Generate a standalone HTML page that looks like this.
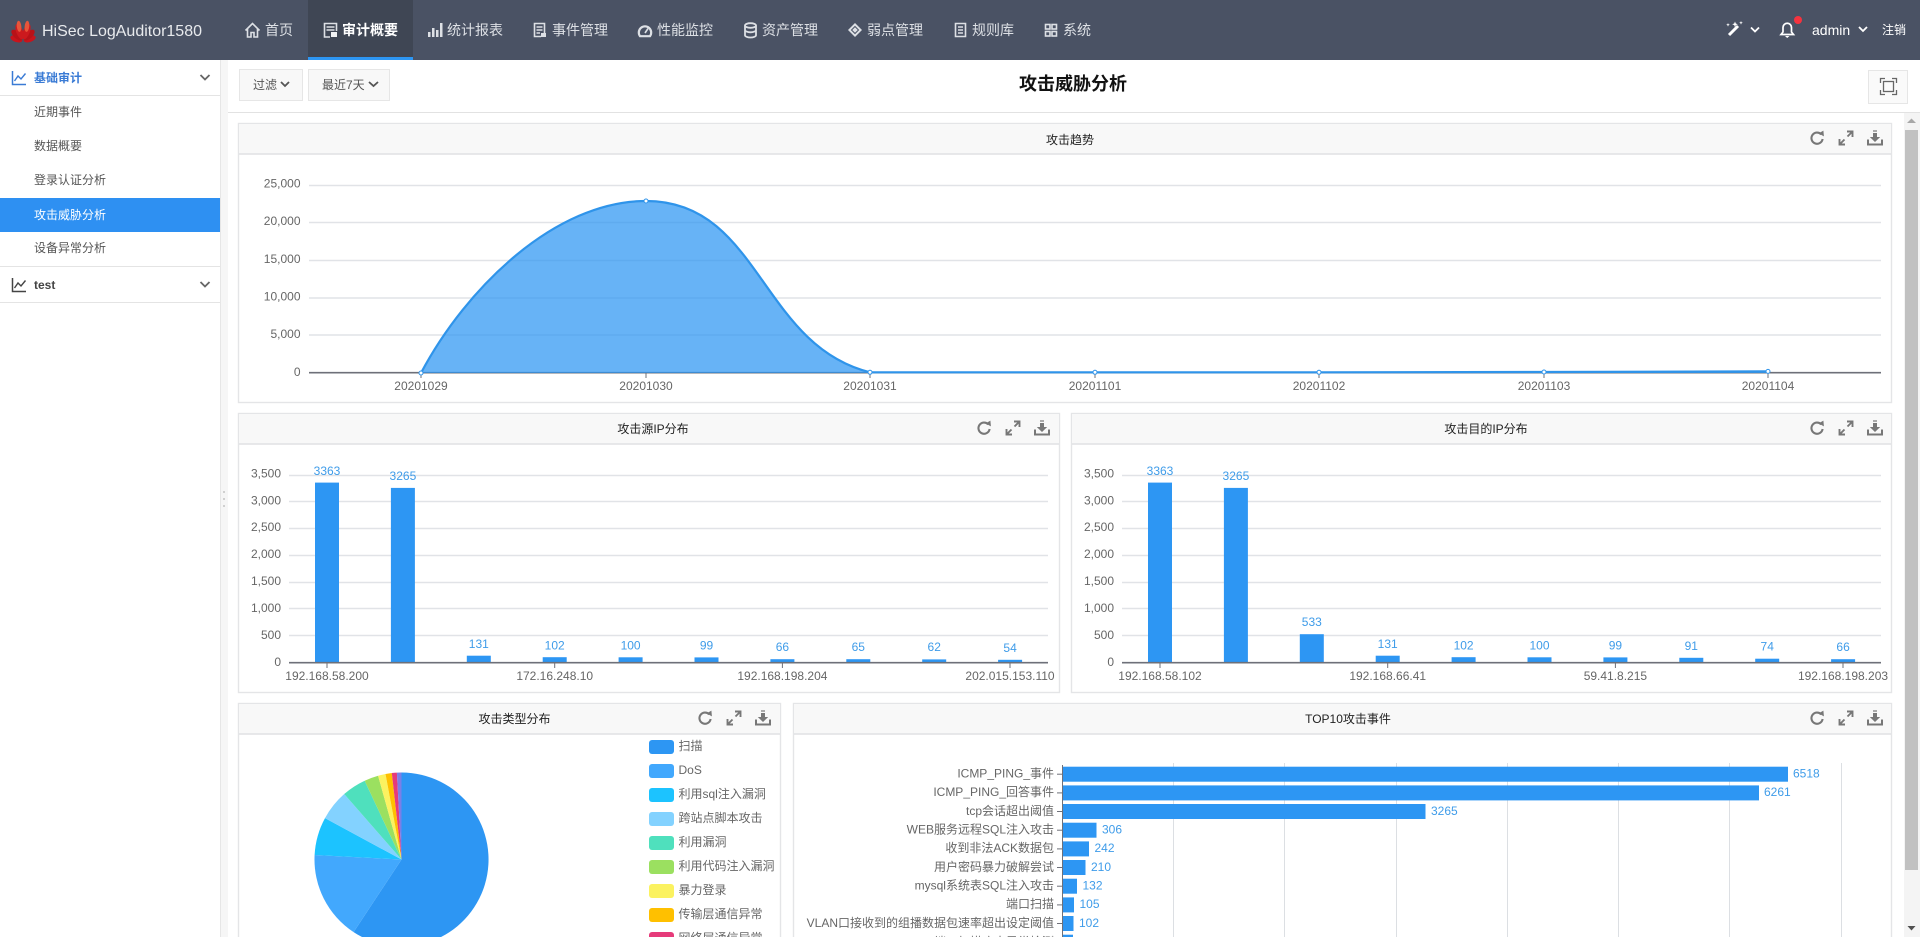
<!DOCTYPE html>
<html lang="zh">
<head>
<meta charset="utf-8">
<title>攻击威胁分析</title>
<style>
html,body{margin:0;padding:0;width:1920px;height:937px;overflow:hidden;background:#fff}
svg{display:block}
text{font-family:"Liberation Sans","Noto Sans CJK SC",sans-serif;font-size:12px}
.nav{fill:#dde0e5;font-size:14px}
.ic{fill:none;stroke:#dde0e5;stroke-width:1.6}
.side{fill:#555}
.ax{fill:#666}
.lb{fill:#3f9ce9;text-anchor:middle}
.r{text-anchor:end}
.m{text-anchor:middle}
.pt{fill:#222;text-anchor:middle}
.g{stroke:#e1e3e7;stroke-width:1.4}
.a{stroke:#6e7079;stroke-width:1.6}
.t{stroke:#6e7079;stroke-width:1}
.b{fill:#2d96f3}
.pn{fill:#fff;stroke:#e4e5e7;stroke-width:1.4}
.ph{fill:#f8f8f8}
.phl{stroke:#e0e1e4;stroke-width:1.4}
</style>
</head>
<body>
<svg xmlns="http://www.w3.org/2000/svg" width="1920" height="937" viewBox="0 0 1920 937">
<defs>
<g id="tools" fill="none" stroke="#777" stroke-linecap="butt">
  <g transform="translate(-29 0)"><path d="M4.2 -3.6A5.6 5.6 0 1 0 5.6 1" stroke-width="2.1"/><path d="M1.6 -4.6L6.4 -7.4L6.9 -1.6Z" fill="#777" stroke="none"/></g>
  <g stroke-width="1.9"><path d="M-5.5 5.5L-1.5 1.5M5.5 -5.5L1.5 -1.5"/><path d="M-6.5 1V6.5H-1M1 -6.5H6.5V-1"/></g>
  <g transform="translate(29 0)"><path d="M-7 1.5V6.5H7V1.5" stroke-width="2"/><path d="M-2 -5H2V-1H5.2L0 4L-5.2 -1H-2Z" fill="#777" stroke="none"/><path d="M-2 -7H2" stroke-width="1.2"/></g>
</g>
</defs>

<!-- header -->
<rect width="1920" height="60" fill="#4a5264"/>
<rect x="308" width="105" height="60" fill="#3f4654"/>
<rect x="308" y="57" width="105" height="3" fill="#2d96f3"/>
<g transform="translate(23 41)">
  <ellipse cx="0" cy="-7" rx="3.2" ry="6.2" fill="#c8141c" transform="rotate(72)"/>
  <ellipse cx="0" cy="-7" rx="3.2" ry="6.2" fill="#c8141c" transform="rotate(-72)"/>
  <ellipse cx="0" cy="-8.5" rx="3.4" ry="7" fill="#b81218" transform="rotate(46)"/>
  <ellipse cx="0" cy="-8.5" rx="3.4" ry="7" fill="#b81218" transform="rotate(-46)"/>
  <ellipse cx="0" cy="-10" rx="3.4" ry="8" fill="#cc1a1e" transform="rotate(20)"/>
  <ellipse cx="0" cy="-10" rx="3.4" ry="8" fill="#cc1a1e" transform="rotate(-20)"/>
  <ellipse cx="-2.4" cy="-15" rx="2.3" ry="5.6" fill="#e8553a" transform="rotate(-6)"/>
  <ellipse cx="2.4" cy="-15" rx="2.3" ry="5.6" fill="#e8553a" transform="rotate(6)"/>
</g>
<text x="42" y="36" fill="#e8eaed" style="font-size:16px" textLength="160">HiSec LogAuditor1580</text>

<path class="ic" d="M245.5 30.5L252.5 23.5L259.5 30.5M247.5 29V37H251V32.5H254V37H257.5V29"/>
<text class="nav" x="265" y="35">首页</text>

<g class="ic"><path d="M336.5 31V23.5H324.5V37H330"/><path d="M326.5 27H334.5M326.5 30H334.5" /></g>
<rect x="331" y="32" width="6" height="5" fill="#f1f2f4"/>
<text class="nav" x="342" y="35" fill="#fff" style="fill:#fff;font-weight:bold">审计概要</text>

<g fill="#dde0e5"><rect x="428" y="32" width="2.5" height="5"/><rect x="432" y="28" width="2.5" height="9"/><rect x="436" y="30" width="2.5" height="7"/><rect x="440" y="23" width="2.5" height="14"/></g>
<text class="nav" x="447" y="35">统计报表</text>

<path class="ic" d="M544.5 33V23.5H534.5V36.5H541M536.5 27H542.5M536.5 30H542.5M536.5 33H540"/><rect x="541" y="33" width="5" height="4" fill="#dde0e5"/>
<text class="nav" x="552" y="35">事件管理</text>

<path class="ic" stroke-width="2.2" d="M640 36.2A6.2 6.2 0 1 1 650 36.2H640Z" style="stroke-width:2.2"/><path class="ic" d="M645 33L648 28.5"/>
<text class="nav" x="657" y="35">性能监控</text>

<g class="ic" style="stroke-width:1.8"><ellipse cx="750.5" cy="25.5" rx="5.5" ry="2.3"/><path d="M745 25.5V35.2C745 36.4 747.5 37.5 750.5 37.5S756 36.4 756 35.2V25.5M745 30C745 31.2 747.5 32.3 750.5 32.3S756 31.2 756 30"/></g>
<path fill="#dde0e5" d="M855 23L862 30L855 37L848 30Z"/><path fill="none" stroke="#4a5264" d="M855 26.5L858.5 30L855 33.5L851.5 30Z"/>
<text class="nav" x="762" y="35">资产管理</text>
<text class="nav" x="867" y="35">弱点管理</text>

<path class="ic" d="M955.5 23.5H965.5V36.5H955.5ZM958 27H963M958 30H963M958 33H963"/>
<text class="nav" x="972" y="35">规则库</text>

<g class="ic"><rect x="1045.5" y="24.5" width="4.5" height="4.5"/><rect x="1052" y="24.5" width="4.5" height="4.5"/><rect x="1045.5" y="31.5" width="4.5" height="4.5"/><rect x="1052" y="31.5" width="4.5" height="4.5"/></g>
<text class="nav" x="1063" y="35">系统</text>

<path d="M1729 35L1738 26" stroke="#fff" stroke-width="3" fill="none"/><path d="M1735 21.5l.8 2 2 .8-2 .8-.8 2-.8-2-2-.8 2-.8zM1728 23l.5 1.3 1.3.5-1.3.5-.5 1.3-.5-1.3-1.3-.5 1.3-.5zM1741 21l.5 1.3 1.3.5-1.3.5-.5 1.3-.5-1.3-1.3-.5 1.3-.5z" fill="#fff"/>
<path d="M1751 27.5L1755 31.5L1759 27.5" fill="none" stroke="#fff" stroke-width="1.8"/>
<path d="M1781 34.5H1793.5L1791.5 32V27.5A4.2 4.2 0 0 0 1783 27.5V32Z" fill="none" stroke="#fff" stroke-width="1.7"/><path d="M1785 36H1789.5L1787.2 38Z" fill="#fff"/>
<circle cx="1798" cy="20" r="4" fill="#f5333f"/>
<text x="1812" y="35" fill="#fff" style="font-size:14px">admin</text>
<path d="M1859 27L1863 31L1867 27" fill="none" stroke="#fff" stroke-width="1.8"/>
<text x="1882" y="34" fill="#fff">注销</text>

<!-- sidebar -->
<rect x="220" y="60" width="8" height="877" fill="#f6f6f6"/>
<rect x="220" y="60" width="1" height="877" fill="#e6e6e6"/>
<g fill="#c4c4c4"><circle cx="224" cy="492" r="1"/><circle cx="224" cy="499" r="1"/><circle cx="224" cy="506" r="1"/></g>
<path d="M12.5 71V84.5H26" fill="none" stroke="#3a7bd5" stroke-width="1.5"/><path d="M14.5 81L18 76L21 79L25.5 73.5" fill="none" stroke="#3a7bd5" stroke-width="1.4"/>
<text x="34" y="82" fill="#3a7bd5" style="font-weight:bold">基础审计</text>
<path d="M200.5 75L205 79.5L209.5 75" fill="none" stroke="#666" stroke-width="1.8"/>
<rect x="0" y="95" width="220" height="1" fill="#e4e4e4"/>
<text class="side" x="34" y="116">近期事件</text>
<text class="side" x="34" y="150">数据概要</text>
<text class="side" x="34" y="184">登录认证分析</text>
<rect x="0" y="198" width="220" height="34" fill="#2e90f2"/>
<text x="34" y="219" fill="#fff">攻击威胁分析</text>
<text class="side" x="34" y="252">设备异常分析</text>
<rect x="0" y="266" width="220" height="1" fill="#e4e4e4"/>
<path d="M12.5 278V291.5H26" fill="none" stroke="#444" stroke-width="1.5"/><path d="M14.5 288L18 283L21 286L25.5 280.5" fill="none" stroke="#444" stroke-width="1.4"/>
<text x="34" y="289" fill="#444" style="font-weight:bold">test</text>
<path d="M200.5 282L205 286.5L209.5 282" fill="none" stroke="#666" stroke-width="1.8"/>
<rect x="0" y="302" width="220" height="1" fill="#e4e4e4"/>

<!-- toolbar -->
<rect x="239.5" y="69.5" width="63" height="31" fill="#f8f8f8" stroke="#e6e6e6"/>
<text x="253" y="89" fill="#555">过滤</text>
<path d="M281 82L285 86L289 82" fill="none" stroke="#555" stroke-width="1.8"/>
<rect x="308.5" y="69.5" width="81" height="31" fill="#f8f8f8" stroke="#e6e6e6"/>
<text x="322" y="89" fill="#555">最近7天</text>
<path d="M369 82L373.5 86L378 82" fill="none" stroke="#555" stroke-width="1.8"/>
<text x="1073" y="90" text-anchor="middle" fill="#111" style="font-size:18px;font-weight:bold">攻击威胁分析</text>
<rect x="1868.5" y="70.5" width="39" height="33" fill="#fafafa" stroke="#e6e6e6"/>
<path d="M1880.5 83V78.5H1885M1892 78.5H1896.5V83M1896.5 90V94.5H1892M1885 94.5H1880.5V90" fill="none" stroke="#666" stroke-width="1.3"/>
<rect x="1883.5" y="81.5" width="10" height="10" fill="none" stroke="#666" stroke-width="1.3"/>
<rect x="228" y="112" width="1692" height="1" fill="#e2e2e2"/>

<!-- scrollbar -->
<rect x="1904" y="113" width="16" height="824" fill="#f4f4f4"/>
<rect x="1905" y="130" width="13" height="740" fill="#c1c1c1"/>
<path d="M1911.5 118.5L1916 123H1907Z" fill="#a8a8a8"/>
<path d="M1907.5 926H1915.5L1911.5 930.5Z" fill="#505050"/>

<!-- panel 1 -->
<rect class="pn" x="238.5" y="123.5" width="1653" height="279"/>
<rect class="ph" x="239" y="124" width="1652" height="30"/>
<line class="phl" x1="239" y1="154" x2="1891" y2="154"/>
<text class="pt" x="1070" y="144">攻击趋势</text>
<use href="#tools" x="1846" y="138"/>
<g>
<line class="g" x1="309" y1="185.5" x2="1881" y2="185.5"/>
<line class="g" x1="309" y1="222.5" x2="1881" y2="222.5"/>
<line class="g" x1="309" y1="260.5" x2="1881" y2="260.5"/>
<line class="g" x1="309" y1="298" x2="1881" y2="298"/>
<line class="g" x1="309" y1="335" x2="1881" y2="335"/>
</g>
<g class="ax">
<text class="r" x="300.5" y="187.5">25,000</text>
<text class="r" x="300.5" y="225">20,000</text>
<text class="r" x="300.5" y="263">15,000</text>
<text class="r" x="300.5" y="300.5">10,000</text>
<text class="r" x="300.5" y="338">5,000</text>
<text class="r" x="300.5" y="376">0</text>
<text class="m" x="421" y="390">20201029</text>
<text class="m" x="646" y="390">20201030</text>
<text class="m" x="870" y="390">20201031</text>
<text class="m" x="1095" y="390">20201101</text>
<text class="m" x="1319" y="390">20201102</text>
<text class="m" x="1544" y="390">20201103</text>
<text class="m" x="1768" y="390">20201104</text>
</g>
<line class="a" x1="309" y1="372.7" x2="1881" y2="372.7"/>
<g class="t"><line x1="421" y1="373" x2="421" y2="378"/><line x1="646" y1="373" x2="646" y2="378"/><line x1="870" y1="373" x2="870" y2="378"/><line x1="1095" y1="373" x2="1095" y2="378"/><line x1="1319" y1="373" x2="1319" y2="378"/><line x1="1544" y1="373" x2="1544" y2="378"/><line x1="1768" y1="373" x2="1768" y2="378"/></g>
<path d="M421 373C466 288 555 201 646 201C760 201 760 345 870 372.3L1095 372.3L1319 372.3L1544 372C1620 371.8 1700 371.6 1768 371.4L1768 373Z" fill="#2d96f3" fill-opacity=".72"/>
<path d="M421 373C466 288 555 201 646 201C760 201 760 345 870 372.3L1095 372.3L1319 372.3L1544 372C1620 371.8 1700 371.6 1768 371.4" fill="none" stroke="#2f94ea" stroke-width="2.2"/>
<g fill="#fff" stroke="#2f94ea" stroke-width="1"><circle cx="421" cy="373" r="2"/><circle cx="646" cy="201" r="2"/><circle cx="870" cy="372.3" r="2"/><circle cx="1095" cy="372.3" r="2"/><circle cx="1319" cy="372.3" r="2"/><circle cx="1544" cy="372" r="2"/><circle cx="1768" cy="371.4" r="2"/></g>

<!-- panel 2 -->
<rect class="pn" x="238.5" y="413.5" width="821" height="279"/>
<rect class="ph" x="239" y="414" width="820" height="30"/>
<line class="phl" x1="239" y1="444" x2="1059" y2="444"/>
<text class="pt" x="653" y="433">攻击源IP分布</text>
<use href="#tools" x="1013" y="428"/>
<g>
<line class="g" x1="289" y1="475.5" x2="1048" y2="475.5"/><line class="g" x1="289" y1="501.5" x2="1048" y2="501.5"/><line class="g" x1="289" y1="528.5" x2="1048" y2="528.5"/><line class="g" x1="289" y1="555.5" x2="1048" y2="555.5"/><line class="g" x1="289" y1="582.5" x2="1048" y2="582.5"/><line class="g" x1="289" y1="608.5" x2="1048" y2="608.5"/><line class="g" x1="289" y1="635.5" x2="1048" y2="635.5"/>
</g>
<g class="ax">
<text class="r" x="281" y="477.5">3,500</text><text class="r" x="281" y="504.5">3,000</text><text class="r" x="281" y="531">2,500</text><text class="r" x="281" y="558">2,000</text><text class="r" x="281" y="585">1,500</text><text class="r" x="281" y="612">1,000</text><text class="r" x="281" y="639">500</text><text class="r" x="281" y="666">0</text>
<text class="m" x="327" y="680">192.168.58.200</text><text class="m" x="554.7" y="680">172.16.248.10</text><text class="m" x="782.4" y="680">192.168.198.204</text><text class="m" x="1010" y="680">202.015.153.110</text>
</g>
<g class="b">
<rect x="315" y="482.6" width="24" height="180"/><rect x="390.9" y="487.9" width="24" height="175"/><rect x="466.8" y="655.7" width="24" height="7"/><rect x="542.7" y="657.2" width="24" height="5.5"/><rect x="618.6" y="657.3" width="24" height="5.4"/><rect x="694.5" y="657.4" width="24" height="5.3"/><rect x="770.4" y="659.2" width="24" height="3.5"/><rect x="846.3" y="659.2" width="24" height="3.5"/><rect x="922.2" y="659.4" width="24" height="3.3"/><rect x="998.1" y="659.8" width="24" height="2.9"/>
</g>
<line class="a" x1="289" y1="662.7" x2="1048" y2="662.7"/>
<g class="t"><line x1="327" y1="663" x2="327" y2="668"/><line x1="554.7" y1="663" x2="554.7" y2="668"/><line x1="782.4" y1="663" x2="782.4" y2="668"/><line x1="1010" y1="663" x2="1010" y2="668"/></g>
<g>
<text class="lb" x="327" y="475">3363</text><text class="lb" x="402.9" y="480">3265</text><text class="lb" x="478.8" y="648">131</text><text class="lb" x="554.7" y="649.5">102</text><text class="lb" x="630.6" y="649.5">100</text><text class="lb" x="706.5" y="649.5">99</text><text class="lb" x="782.4" y="651">66</text><text class="lb" x="858.3" y="651">65</text><text class="lb" x="934.2" y="651">62</text><text class="lb" x="1010.1" y="652">54</text>
</g>

<!-- panel 3 -->
<rect class="pn" x="1071.5" y="413.5" width="820" height="279"/>
<rect class="ph" x="1072" y="414" width="819" height="30"/>
<line class="phl" x1="1072" y1="444" x2="1891" y2="444"/>
<text class="pt" x="1486" y="433">攻击目的IP分布</text>
<use href="#tools" x="1846" y="428"/>
<g>
<line class="g" x1="1122" y1="475.5" x2="1881" y2="475.5"/><line class="g" x1="1122" y1="501.5" x2="1881" y2="501.5"/><line class="g" x1="1122" y1="528.5" x2="1881" y2="528.5"/><line class="g" x1="1122" y1="555.5" x2="1881" y2="555.5"/><line class="g" x1="1122" y1="582.5" x2="1881" y2="582.5"/><line class="g" x1="1122" y1="608.5" x2="1881" y2="608.5"/><line class="g" x1="1122" y1="635.5" x2="1881" y2="635.5"/>
</g>
<g class="ax">
<text class="r" x="1114" y="477.5">3,500</text><text class="r" x="1114" y="504.5">3,000</text><text class="r" x="1114" y="531">2,500</text><text class="r" x="1114" y="558">2,000</text><text class="r" x="1114" y="585">1,500</text><text class="r" x="1114" y="612">1,000</text><text class="r" x="1114" y="639">500</text><text class="r" x="1114" y="666">0</text>
<text class="m" x="1160" y="680">192.168.58.102</text><text class="m" x="1387.7" y="680">192.168.66.41</text><text class="m" x="1615.4" y="680">59.41.8.215</text><text class="m" x="1843" y="680">192.168.198.203</text>
</g>
<g class="b">
<rect x="1148" y="482.6" width="24" height="180"/><rect x="1223.9" y="487.9" width="24" height="175"/><rect x="1299.8" y="634.2" width="24" height="28.5"/><rect x="1375.7" y="655.7" width="24" height="7"/><rect x="1451.6" y="657.2" width="24" height="5.5"/><rect x="1527.5" y="657.3" width="24" height="5.4"/><rect x="1603.4" y="657.4" width="24" height="5.3"/><rect x="1679.3" y="657.8" width="24" height="4.9"/><rect x="1755.2" y="658.7" width="24" height="4"/><rect x="1831.1" y="659.2" width="24" height="3.5"/>
</g>
<line class="a" x1="1122" y1="662.7" x2="1881" y2="662.7"/>
<g class="t"><line x1="1160" y1="663" x2="1160" y2="668"/><line x1="1387.7" y1="663" x2="1387.7" y2="668"/><line x1="1615.4" y1="663" x2="1615.4" y2="668"/><line x1="1843" y1="663" x2="1843" y2="668"/></g>
<g>
<text class="lb" x="1160" y="475">3363</text><text class="lb" x="1235.9" y="480">3265</text><text class="lb" x="1311.8" y="626">533</text><text class="lb" x="1387.7" y="648">131</text><text class="lb" x="1463.6" y="649.5">102</text><text class="lb" x="1539.5" y="649.5">100</text><text class="lb" x="1615.4" y="649.5">99</text><text class="lb" x="1691.3" y="650">91</text><text class="lb" x="1767.2" y="650.5">74</text><text class="lb" x="1843.1" y="651">66</text>
</g>

<!-- panel 4 -->
<rect class="pn" x="238.5" y="703.5" width="542" height="240"/>
<rect class="ph" x="239" y="704" width="541" height="30"/>
<line class="phl" x1="239" y1="734" x2="780" y2="734"/>
<text class="pt" x="514.5" y="723">攻击类型分布</text>
<use href="#tools" x="734" y="718"/>
<path d="M401.5 859.5L401.5 772.5A87 87 0 1 1 353.6 932.1Z" fill="#2d96f3"/>
<path d="M401.5 859.5L353.6 932.1A87 87 0 0 1 314.6 855Z" fill="#42a8fd"/>
<path d="M401.5 859.5L314.6 855A87 87 0 0 1 325 818.1Z" fill="#1cc3ff"/>
<path d="M401.5 859.5L325 818.1A87 87 0 0 1 344.2 794Z" fill="#83d2ff"/>
<path d="M401.5 859.5L344.2 794A87 87 0 0 1 364.7 780.7Z" fill="#4fe0bd"/>
<path d="M401.5 859.5L364.7 780.7A87 87 0 0 1 378.1 775.7Z" fill="#9be060"/>
<path d="M401.5 859.5L378.1 775.7A87 87 0 0 1 385.5 774Z" fill="#fbf260"/>
<path d="M401.5 859.5L385.5 774A87 87 0 0 1 391.8 773Z" fill="#ffc000"/>
<path d="M401.5 859.5L391.8 773A87 87 0 0 1 396.9 772.6Z" fill="#e63b7a"/>
<path d="M401.5 859.5L396.9 772.6A87 87 0 0 1 401.5 772.5Z" fill="#7a7fe8"/>
<g>
<rect x="649" y="740" width="25" height="14" rx="3" fill="#2d96f3"/><rect x="649" y="764" width="25" height="14" rx="3" fill="#42a8fd"/><rect x="649" y="788" width="25" height="14" rx="3" fill="#1cc3ff"/><rect x="649" y="812" width="25" height="14" rx="3" fill="#83d2ff"/><rect x="649" y="836" width="25" height="14" rx="3" fill="#4fe0bd"/><rect x="649" y="860" width="25" height="14" rx="3" fill="#9be060"/><rect x="649" y="884" width="25" height="14" rx="3" fill="#fbf260"/><rect x="649" y="908" width="25" height="14" rx="3" fill="#ffc000"/><rect x="649" y="932" width="25" height="14" rx="3" fill="#e63b7a"/>
</g>
<g class="ax">
<text x="678.5" y="750">扫描</text><text x="678.5" y="774">DoS</text><text x="678.5" y="798">利用sql注入漏洞</text><text x="678.5" y="822">跨站点脚本攻击</text><text x="678.5" y="846">利用漏洞</text><text x="678.5" y="870">利用代码注入漏洞</text><text x="678.5" y="894">暴力登录</text><text x="678.5" y="918">传输层通信异常</text><text x="678.5" y="942">网络层通信异常</text>
</g>

<!-- panel 5 -->
<rect class="pn" x="793.5" y="703.5" width="1098" height="240"/>
<rect class="ph" x="794" y="704" width="1097" height="30"/>
<line class="phl" x1="794" y1="734" x2="1891" y2="734"/>
<text class="pt" x="1348" y="723">TOP10攻击事件</text>
<use href="#tools" x="1846" y="718"/>
<g stroke="#dcdfe3" stroke-width="1">
<line x1="1173.5" y1="763" x2="1173.5" y2="937"/><line x1="1284.5" y1="763" x2="1284.5" y2="937"/><line x1="1396.5" y1="763" x2="1396.5" y2="937"/><line x1="1507.5" y1="763" x2="1507.5" y2="937"/><line x1="1618.5" y1="763" x2="1618.5" y2="937"/><line x1="1729.5" y1="763" x2="1729.5" y2="937"/><line x1="1841.5" y1="763" x2="1841.5" y2="937"/>
</g>
<g class="b">
<rect x="1063" y="766.7" width="725" height="15"/><rect x="1063" y="785.4" width="696" height="15"/><rect x="1063" y="804" width="362.5" height="15"/><rect x="1063" y="822.7" width="33.5" height="15"/><rect x="1063" y="841.4" width="26" height="15"/><rect x="1063" y="860" width="22.5" height="15"/><rect x="1063" y="878.7" width="14" height="15"/><rect x="1063" y="897.4" width="11" height="15"/><rect x="1063" y="916" width="10.5" height="15"/><rect x="1063" y="934.7" width="10" height="15"/>
</g>
<line x1="1062.5" y1="765" x2="1062.5" y2="937" stroke="#6e7079" stroke-width="1"/>
<g class="t">
<line x1="1057" y1="774.2" x2="1062" y2="774.2"/><line x1="1057" y1="792.9" x2="1062" y2="792.9"/><line x1="1057" y1="811.5" x2="1062" y2="811.5"/><line x1="1057" y1="830.2" x2="1062" y2="830.2"/><line x1="1057" y1="848.9" x2="1062" y2="848.9"/><line x1="1057" y1="867.5" x2="1062" y2="867.5"/><line x1="1057" y1="886.2" x2="1062" y2="886.2"/><line x1="1057" y1="904.9" x2="1062" y2="904.9"/><line x1="1057" y1="923.5" x2="1062" y2="923.5"/>
</g>
<g class="ax">
<text class="r" x="1054" y="777.5">ICMP_PING_事件</text>
<text class="r" x="1054" y="796">ICMP_PING_回答事件</text>
<text class="r" x="1054" y="815">tcp会话超出阈值</text>
<text class="r" x="1054" y="833.5">WEB服务远程SQL注入攻击</text>
<text class="r" x="1054" y="852">收到非法ACK数据包</text>
<text class="r" x="1054" y="871">用户密码暴力破解尝试</text>
<text class="r" x="1054" y="889.5">mysql系统表SQL注入攻击</text>
<text class="r" x="1054" y="908">端口扫描</text>
<text class="r" x="1054" y="927">VLAN口接收到的组播数据包速率超出设定阈值</text>
<text class="r" x="1054" y="946">tcp端口扫描攻击异常检测</text>
</g>
<g fill="#3f9ce9">
<text x="1793" y="777.5">6518</text><text x="1764" y="796">6261</text><text x="1431" y="815">3265</text><text x="1102" y="833.5">306</text><text x="1094.5" y="852">242</text><text x="1091" y="871">210</text><text x="1082.5" y="889.5">132</text><text x="1079.5" y="908">105</text><text x="1079" y="927">102</text>
</g>
</svg>
</body>
</html>
